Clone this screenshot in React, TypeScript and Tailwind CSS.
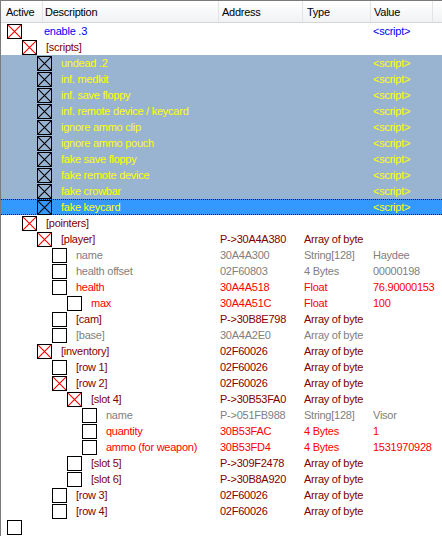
import React from "react";

type Row = {
  level: number;
  text: string;
  color: string;
  addr?: string;
  type?: string;
  value?: string;
  checked?: boolean;
  band?: boolean;
  selected?: boolean;
  empty?: boolean;
};

const BLUE = "text-[#0000ff]";
const DRED = "text-[#800000]";
const RED = "text-[#ff0000]";
const GRAY = "text-[#808080]";
const YEL = "text-[#ffff00]";

const rows: Row[] = [
  { level: 0, text: "enable .3", color: BLUE, value: "<script>", checked: true },
  { level: 1, text: "[scripts]", color: DRED, checked: true },
  { level: 2, text: "undead .2", color: YEL, value: "<script>", checked: true, band: true },
  { level: 2, text: "inf. medkit", color: YEL, value: "<script>", checked: true, band: true },
  { level: 2, text: "inf. save floppy", color: YEL, value: "<script>", checked: true, band: true },
  { level: 2, text: "inf. remote device / keycard", color: YEL, value: "<script>", checked: true, band: true },
  { level: 2, text: "ignore ammo clip", color: YEL, value: "<script>", checked: true, band: true },
  { level: 2, text: "ignore ammo pouch", color: YEL, value: "<script>", checked: true, band: true },
  { level: 2, text: "fake save floppy", color: YEL, value: "<script>", checked: true, band: true },
  { level: 2, text: "fake remote device", color: YEL, value: "<script>", checked: true, band: true },
  { level: 2, text: "fake crowbar", color: YEL, value: "<script>", checked: true, band: true },
  { level: 2, text: "fake keycard", color: YEL, value: "<script>", checked: true, selected: true },
  { level: 1, text: "[pointers]", color: DRED, checked: true },
  { level: 2, text: "[player]", color: DRED, addr: "P->30A4A380", type: "Array of byte", checked: true },
  { level: 3, text: "name", color: GRAY, addr: "30A4A300", type: "String[128]", value: "Haydee" },
  { level: 3, text: "health offset", color: GRAY, addr: "02F60803", type: "4 Bytes", value: "00000198" },
  { level: 3, text: "health", color: RED, addr: "30A4A518", type: "Float", value: "76.90000153" },
  { level: 4, text: "max", color: RED, addr: "30A4A51C", type: "Float", value: "100" },
  { level: 3, text: "[cam]", color: DRED, addr: "P->30B8E798", type: "Array of byte" },
  { level: 3, text: "[base]", color: GRAY, addr: "30A4A2E0", type: "Array of byte" },
  { level: 2, text: "[inventory]", color: DRED, addr: "02F60026", type: "Array of byte", checked: true },
  { level: 3, text: "[row 1]", color: DRED, addr: "02F60026", type: "Array of byte" },
  { level: 3, text: "[row 2]", color: DRED, addr: "02F60026", type: "Array of byte", checked: true },
  { level: 4, text: "[slot 4]", color: DRED, addr: "P->30B53FA0", type: "Array of byte", checked: true },
  { level: 5, text: "name", color: GRAY, addr: "P->051FB988", type: "String[128]", value: "Visor" },
  { level: 5, text: "quantity", color: RED, addr: "30B53FAC", type: "4 Bytes", value: "1" },
  { level: 5, text: "ammo (for weapon)", color: RED, addr: "30B53FD4", type: "4 Bytes", value: "1531970928" },
  { level: 4, text: "[slot 5]", color: DRED, addr: "P->309F2478", type: "Array of byte" },
  { level: 4, text: "[slot 6]", color: DRED, addr: "P->30B8A920", type: "Array of byte" },
  { level: 3, text: "[row 3]", color: DRED, addr: "02F60026", type: "Array of byte" },
  { level: 3, text: "[row 4]", color: DRED, addr: "02F60026", type: "Array of byte" },
  { level: 0, text: "", color: DRED, empty: true },
];

const indent = ["pl-[6px]", "pl-[21px]", "pl-[36px]", "pl-[51px]", "pl-[66px]", "pl-[81px]"];

function Box({ checked, dark }: { checked?: boolean; dark: boolean }) {
  const c = dark ? "#000000" : "#ff0000";
  return (
    <div
      className={
        "w-[15px] h-[15px] shrink-0 border border-black mt-[1px] self-start " +
        (dark ? "bg-transparent" : "bg-white")
      }
    >
      {checked && (
        <svg width="13" height="13" viewBox="0 0 13 13" className="block">
          <path d="M0 0L13 13M13 0L0 13" stroke={c} strokeWidth="1.1" fill="none" />
        </svg>
      )}
    </div>
  );
}

export default function App() {
  return (
    <div
      className="w-[442px] h-[536px] bg-white border-t border-l border-[#7a7a7a] overflow-hidden text-[11px] tracking-[-0.25px] leading-4"
      style={{ fontFamily: '"Liberation Sans", Arial, sans-serif' }}
    >
      <div className="flex h-[22px] border-b border-[#d5d5d5] bg-gradient-to-b from-white to-[#f1f2f4] text-black">
        <div className="w-[42px] flex items-center pl-[5px] border-r border-[#e3e4e6]">Active</div>
        <div className="w-[176px] flex items-center pl-[2px] border-r border-[#e3e4e6]">Description</div>
        <div className="w-[84px] flex items-center pl-[3px] border-r border-[#e3e4e6]">Address</div>
        <div className="w-[68px] flex items-center pl-[4px] border-r border-[#e3e4e6]">Type</div>
        <div className="w-[62px] flex items-center pl-[3px] border-r border-[#e3e4e6]">Value</div>
        <div className="flex-1" />
      </div>
      {rows.map((r, i) => {
        const dark = !!(r.band || r.selected);
        const shift = r.selected ? " -mt-px" : "";
        return (
          <div
            key={i}
            className={
              "flex h-4 " +
              (r.band ? "bg-[#99b4d1] " : "") +
              (r.selected ? "bg-[#3399ff] border-y border-dotted border-[#330033] " : "")
            }
          >
            <div className={"w-[218px] flex items-start shrink-0 " + indent[r.level]}>
              <div className={r.selected ? "-mt-px" : ""}>
                <Box checked={r.checked} dark={dark} />
              </div>
              {!r.empty && (
                <span className={"whitespace-nowrap " + (r.level === 0 ? "ml-[22px] " : "ml-[9px] ") + r.color + shift}>
                  {r.text}
                </span>
              )}
            </div>
            <div className={"w-[84px] shrink-0 pl-[1px] whitespace-nowrap " + r.color + shift}>{r.addr}</div>
            <div className={"w-[68px] shrink-0 pl-[1px] whitespace-nowrap " + r.color + shift}>{r.type}</div>
            <div className={"flex-1 pl-[2px] whitespace-nowrap " + r.color + shift}>{r.value}</div>
          </div>
        );
      })}
    </div>
  );
}
